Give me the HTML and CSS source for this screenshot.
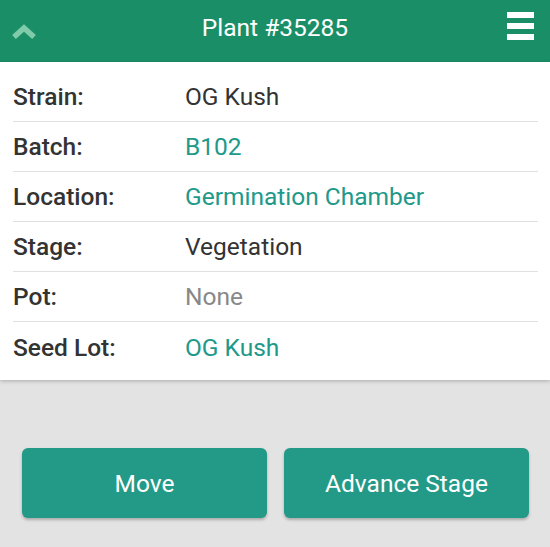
FILE: index.html
```html
<!DOCTYPE html>
<html>
<head>
<meta charset="utf-8">
<link rel="stylesheet" href="styles.css">
</head>
<body>
<header class="topbar">
  <svg class="chev" width="24" height="16" viewBox="0 0 24 16"><path d="M2 13 L12 4 L22 13" fill="none" stroke="#80cba9" stroke-width="5.5"/></svg>
  <h1 class="title">Plant #35285</h1>
  <div class="burger"><span></span><span></span><span></span></div>
</header>
<section class="card">
  <div class="row"><div class="label">Strain:</div><div class="value">OG Kush</div></div>
  <div class="row"><div class="label">Batch:</div><div class="value link">B102</div></div>
  <div class="row"><div class="label">Location:</div><div class="value link">Germination Chamber</div></div>
  <div class="row"><div class="label">Stage:</div><div class="value">Vegetation</div></div>
  <div class="row"><div class="label">Pot:</div><div class="value muted">None</div></div>
  <div class="row"><div class="label">Seed Lot:</div><div class="value link">OG Kush</div></div>
</section>
<div class="actions">
  <button class="btn">Move</button>
  <button class="btn">Advance Stage</button>
</div>
</body>
</html>
```
FILE: styles.css
```css
html, body {
  margin: 0;
  padding: 0;
}
body {
  background: #e3e3e3;
  font-family: Roboto, "Liberation Sans", sans-serif;
  height: 547px;
  overflow: hidden;
}
.topbar {
  height: 62px;
  background: #1a8f67;
  display: flex;
  align-items: center;
  justify-content: space-between;
  padding: 0 16px 0 12px;
  position: relative;
}
.chev {
  display: block;
  margin-top: 2px;
}
.title {
  position: absolute;
  left: 0;
  right: 0;
  top: 0;
  margin: 0;
  text-align: center;
  color: #fff;
  font-weight: 400;
  font-size: 24.5px;
  line-height: 56px;
  pointer-events: none;
}
.burger {
  display: flex;
  flex-direction: column;
  gap: 5px;
  margin-top: -11px;
}
.burger span {
  display: block;
  width: 27px;
  height: 6px;
  background: #fff;
}
.card {
  background: #fff;
  padding: 10px 12px 8px 13px;
  box-shadow: 0 1px 4px rgba(0,0,0,0.25);
  position: relative;
}
.row {
  display: flex;
  align-items: center;
  height: 50px;
  box-sizing: border-box;
  border-bottom: 1px solid #e0e0e0;
  font-size: 24.5px;
}
.row:last-child {
  border-bottom: none;
}
.label {
  width: 172px;
  color: #333;
  font-weight: 500;
}
.value {
  color: #333;
}
.value.link {
  color: #21998a;
}
.value.muted {
  color: #888;
}
.actions {
  display: flex;
  gap: 17px;
  padding: 68px 21px 0 22px;
}
.btn {
  flex: 1;
  height: 70px;
  border: none;
  border-radius: 6px;
  background: #229a87;
  color: #fff;
  font-family: Roboto, "Liberation Sans", sans-serif;
  font-size: 24.5px;
  box-shadow: 0 2px 3px rgba(0,0,0,0.25);
}
```
